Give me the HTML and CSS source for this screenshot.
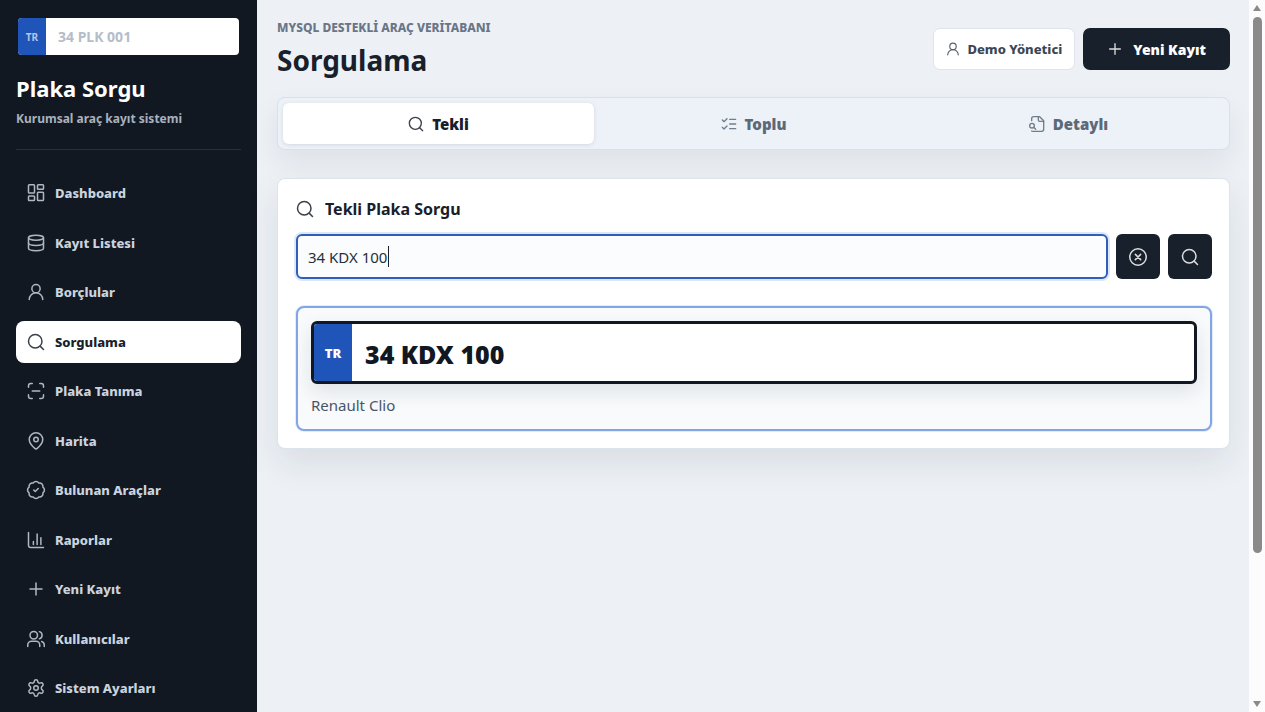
FILE: index.html
```html
<!DOCTYPE html>
<html lang="tr">
<head>
  <meta charset="UTF-8" />
  <meta name="viewport" content="width=device-width, initial-scale=1.0" />
  <title>Plaka Sorgu</title>
  <link rel="stylesheet" href="styles.css">
</head>
<body>

  <!-- Shared icons -->
  <svg class="sprite" aria-hidden="true">
    <symbol id="i-search" viewBox="0 0 24 24"><circle cx="11" cy="11" r="9"/><path d="m22 22-4.500-4.500"/></symbol>
    <symbol id="i-user" viewBox="0 0 24 24"><circle cx="12" cy="7.500" r="5.500"/><path d="M21 22a9 9 0 0 0-18 0"/></symbol>
    <symbol id="i-plus" viewBox="0 0 24 24"><path d="M4 12h16M12 4v16"/></symbol>
  </svg>

  <div class="app">
    <aside class="sidebar">
      <div class="brand">
        <div class="mini-plate">
          <span class="mini-tr">TR</span>
          <span class="mini-no">34 PLK 001</span>
        </div>
        <h2>Plaka Sorgu</h2>
        <p>Kurumsal araç kayıt sistemi</p>
      </div>

      <nav class="menu">
        <a href="#dashboard"><svg class="icon" viewBox="0 0 24 24"><rect x="2" y="1" width="8" height="11" rx="1"/><rect x="14" y="1" width="8" height="6" rx="1"/><rect x="14" y="11" width="8" height="11" rx="1"/><rect x="2" y="16" width="8" height="6" rx="1"/></svg>Dashboard</a>
        <a href="#kayitlar"><svg class="icon" viewBox="0 0 24 24"><ellipse cx="12" cy="5" rx="10" ry="3.2"/><path d="M2 5v14c0 1.800 4.500 3.200 10 3.200s10-1.400 10-3.200V5"/><path d="M2 12c0 1.800 4.500 3.200 10 3.200s10-1.400 10-3.200"/></svg>Kayıt Listesi</a>
        <a href="#borclular"><svg class="icon"><use href="#i-user"/></svg>Borçlular</a>
        <a href="#sorgulama" class="active"><svg class="icon"><use href="#i-search"/></svg>Sorgulama</a>
        <a href="#tanima"><svg class="icon" viewBox="0 0 24 24"><path d="M2 7V5a3 3 0 0 1 3-3h2M17 2h2a3 3 0 0 1 3 3v2M22 17v2a3 3 0 0 1-3 3h-2M7 22H5a3 3 0 0 1-3-3v-2M7 12h10"/></svg>Plaka Tanıma</a>
        <a href="#harita"><svg class="icon" viewBox="0 0 24 24"><path d="M21 10c0 5-5.500 10.200-7.400 11.800a2.500 2.500 0 0 1-3.200 0C8.500 20.200 3 15 3 10a9 9 0 0 1 18 0"/><circle cx="12" cy="10" r="3"/></svg>Harita</a>
        <a href="#bulunan"><svg class="icon" viewBox="0 0 24 24"><path d="M2.800 8.200a4.500 4.500 0 0 1 5.400-5.400 4.500 4.500 0 0 1 7.600 0 4.500 4.500 0 0 1 5.400 5.400 4.500 4.500 0 0 1 0 7.600 4.500 4.500 0 0 1-5.400 5.400 4.500 4.500 0 0 1-7.600 0 4.500 4.500 0 0 1-5.400-5.400 4.500 4.500 0 0 1 0-7.600Z"/><path d="m9 12 2 2 4-4"/></svg>Bulunan Araçlar</a>
        <a href="#raporlar"><svg class="icon" viewBox="0 0 24 24"><path d="M2 2v17a3 3 0 0 0 3 3h17M18.500 18V9M13.500 18V4M8.500 18v-4"/></svg>Raporlar</a>
        <a href="#yeni"><svg class="icon"><use href="#i-plus"/></svg>Yeni Kayıt</a>
        <a href="#kullanicilar"><svg class="icon" viewBox="0 0 24 24"><circle cx="9" cy="7" r="5"/><path d="M1 22v-2a5 5 0 0 1 5-5h6a5 5 0 0 1 5 5v2M23 22v-2a5 5 0 0 0-3.500-4.700M16.500 2.200a5 5 0 0 1 0 9.600"/></svg>Kullanıcılar</a>
        <a href="#ayarlar"><svg class="icon" viewBox="0 0 24 24"><path d="M9.670 3.140a2.340 2.340 0 0 1 4.660 0 2.500 2.500 0 0 0 3.600 2.100 2.500 2.500 0 0 1 2.500 4.300 2.900 2.900 0 0 0 0 4.900 2.500 2.500 0 0 1-2.500 4.300 2.500 2.500 0 0 0-3.600 2.100 2.340 2.340 0 0 1-4.660 0 2.500 2.500 0 0 0-3.600-2.100 2.500 2.500 0 0 1-2.500-4.300 2.900 2.900 0 0 0 0-4.900 2.500 2.500 0 0 1 2.500-4.300 2.500 2.500 0 0 0 3.600-2.100"/><circle cx="12" cy="12" r="3"/></svg>Sistem Ayarları</a>
      </nav>
    </aside>

    <main class="content">
      <header class="topbar">
        <div class="heading">
          <p class="eyebrow">MYSQL DESTEKLİ ARAÇ VERİTABANI</p>
          <h1>Sorgulama</h1>
        </div>
        <div class="actions">
          <button type="button" class="user-btn"><svg class="icon tiny"><use href="#i-user"/></svg>Demo Yönetici</button>
          <button type="button" class="new-btn"><svg class="icon small"><use href="#i-plus"/></svg>Yeni Kayıt</button>
        </div>
      </header>

      <div class="tabs">
        <button type="button" class="tab active"><svg class="icon small"><use href="#i-search"/></svg>Tekli</button>
        <button type="button" class="tab"><svg class="icon small" viewBox="0 0 24 24"><path d="M13 5h9M13 12h9M13 19h9M2 17l2.500 2.500L9 15M2 6l2.500 2.500L9 4"/></svg>Toplu</button>
        <button type="button" class="tab"><svg class="icon small" viewBox="0 0 24 24"><path d="M14 1v5a2 2 0 0 0 2 2h6"/><path d="M4 22.500a3 3 0 0 0 2 .5h13a3 3 0 0 0 3-3V7l-6-6H7a3 3 0 0 0-3 3v3"/><circle cx="4.500" cy="14.500" r="3.500"/><path d="m10 20-3-3"/></svg>Detaylı</button>
      </div>

      <section class="card">
        <h3><svg class="icon"><use href="#i-search"/></svg><label for="plate">Tekli Plaka Sorgu</label></h3>
        <form class="search-row" id="searchForm">
          <div class="field">
            <input type="text" id="plate" value="34 KDX 100" autocomplete="off">
            <span class="caret" aria-hidden="true"></span>
          </div>
          <button type="button" class="square-btn" id="clearBtn" aria-label="Temizle"><svg class="icon" viewBox="0 0 24 24"><circle cx="12" cy="12" r="11"/><path d="m15.500 8.500-7 7M8.500 8.500l7 7"/></svg></button>
          <button type="submit" class="square-btn" aria-label="Sorgula"><svg class="icon"><use href="#i-search"/></svg></button>
        </form>

        <button type="button" class="result">
          <span class="plate">
            <span class="plate-tr">TR</span>
            <span class="plate-no">34 KDX 100</span>
          </span>
          <span class="vehicle">Renault Clio</span>
        </button>
      </section>
    </main>

    <div class="scrollbar" aria-hidden="true">
      <svg class="arrow" viewBox="0 0 10 8"><path d="M5 1 9 7H1z"/></svg>
      <div class="track"><div class="thumb"></div></div>
      <svg class="arrow" viewBox="0 0 10 8"><path d="M5 7 9 1H1z"/></svg>
    </div>
  </div>

  <script>
    const plate = document.getElementById('plate');

    document.getElementById('clearBtn').addEventListener('click', () => {
      plate.value = '';
      plate.focus();
    });

    // the drawn caret is only for the idle state
    plate.addEventListener('focus', () => {
      document.querySelector('.caret').hidden = true;
    });

    document.getElementById('searchForm').addEventListener('submit', e => {
      e.preventDefault();
      document.querySelector('.plate-no').textContent = plate.value.toUpperCase();
    });
  </script>

</body>
</html>
```
FILE: styles.css
```css
* {
  box-sizing: border-box;
}

body {
  margin: 0;
  font-family: 'Segoe UI', 'Noto Sans', 'Open Sans', sans-serif;
  font-size: 15px;
  color: #18202b;
  background: #edf1f6;
}

h1, h2, h3, p {
  margin: 0;
}

button, input {
  font-family: inherit;
}

button {
  cursor: pointer;
}

.sprite {
  position: absolute;
  width: 0;
  height: 0;
}

.icon {
  width: 18px;
  height: 18px;
  flex: none;
  fill: none;
  stroke: currentColor;
  stroke-width: 2;
  stroke-linecap: round;
  stroke-linejoin: round;
  overflow: visible;
  opacity: 0.85;
}

.icon.small {
  width: 16px;
  height: 16px;
}

.icon.tiny {
  width: 14px;
  height: 14px;
}

.app {
  display: flex;
  height: 100vh;
}

/* Sidebar */
.sidebar {
  width: 257px;
  flex: none;
  display: flex;
  flex-direction: column;
  padding: 16px 16px 3px;
  background: #111822;
}

.brand {
  padding-bottom: 20px;
  margin-bottom: 22px;
  border-bottom: 1px solid #29303a;
}

.mini-plate {
  display: flex;
  height: 41px;
  border: 2px solid #111822;
  border-radius: 6px;
  overflow: hidden;
  background: #fff;
  font-weight: 700;
}

.mini-tr {
  display: flex;
  align-items: center;
  justify-content: center;
  width: 28px;
  background: #1f55b8;
  color: #b5c5e6;
  font-size: 10px;
}

.mini-no {
  padding-left: 12px;
  font-size: 14px;
  line-height: 38px;
  color: #b4bdca;
}

.brand h2 {
  margin-top: 15px;
  font-size: 22px;
  line-height: 32px;
  font-weight: 700;
  color: #fff;
}

.brand p {
  margin-top: 5px;
  font-size: 12px;
  line-height: 20px;
  font-weight: 700;
  color: #a9b1be;
}

.menu {
  flex: 1;
  display: flex;
  flex-direction: column;
  justify-content: space-between;
}

.menu a {
  display: flex;
  align-items: center;
  gap: 10px;
  height: 42px;
  padding: 0 11px;
  border-radius: 8px;
  color: #cbd3df;
  font-size: 13px;
  font-weight: 800;
  text-decoration: none;
}

.menu a.active {
  background: #fff;
  color: #18202b;
}

/* Content */
.content {
  flex: 1;
  min-width: 0;
  padding: 18px 19px 18px 20px;
}

.topbar {
  display: flex;
  justify-content: space-between;
  align-items: flex-start;
}

.eyebrow {
  font-size: 12px;
  line-height: 20px;
  font-weight: 800;
  color: #6a7687;
}

h1 {
  font-size: 28px;
  line-height: 44px;
  font-weight: 700;
}

.actions {
  display: flex;
  gap: 8px;
  padding-top: 10px;
}

.user-btn,
.new-btn {
  display: flex;
  align-items: center;
  justify-content: center;
  height: 42px;
  border-radius: 7px;
}

.user-btn {
  gap: 7px;
  padding: 0 12px;
  border: 1px solid #dde4ee;
  background: #fff;
  color: #3a4656;
  font-size: 13px;
  font-weight: 800;
}

.new-btn {
  gap: 10px;
  padding: 0 24px;
  border: none;
  background: #18202b;
  color: #fff;
  font-size: 14px;
  font-weight: 900;
}

.tabs {
  display: grid;
  grid-template-columns: repeat(3, 1fr);
  gap: 4px;
  margin-top: 15px;
  padding: 5px;
  border: 1px solid #d8e0ea;
  border-radius: 8px;
  background: #edf2f8;
  box-shadow: 0 12px 28px rgba(24, 32, 43, 0.07);
}

.tab {
  display: flex;
  align-items: center;
  justify-content: center;
  gap: 8px;
  height: 41px;
  border: none;
  border-radius: 6px;
  background: none;
  color: #5c6979;
  font-size: 15px;
  font-weight: 900;
}

.tab.active {
  background: #fff;
  color: #18202b;
  box-shadow: 0 1px 4px rgba(24, 32, 43, 0.12);
}

.card {
  margin-top: 28px;
  padding: 17px 17px 17px 18px;
  border: 1px solid #dbe3ec;
  border-radius: 8px;
  background: #fff;
  box-shadow: 0 14px 34px rgba(24, 32, 43, 0.09);
}

.card h3 {
  display: flex;
  align-items: center;
  gap: 11px;
  font-size: 16px;
  line-height: 26px;
  font-weight: 700;
}

.search-row {
  display: flex;
  gap: 8px;
  margin-top: 12px;
}

.field {
  position: relative;
  flex: 1;
}

.field input {
  display: block;
  width: 100%;
  height: 45px;
  padding: 0 10px;
  border: 2px solid #2f5fb8;
  border-radius: 6px;
  outline: none;
  background: #fbfcfe;
  box-shadow: 0 0 0 2px #dbe8fb;
  color: #26303c;
  font-size: 15px;
}

/* Text cursor at the end of the value */
.caret {
  position: absolute;
  left: 92px;
  top: 12px;
  width: 1px;
  height: 21px;
  background: #18202b;
}

.square-btn {
  display: flex;
  align-items: center;
  justify-content: center;
  width: 44px;
  height: 45px;
  padding: 0;
  border: none;
  border-radius: 6px;
  background: #18202b;
  color: #fff;
}

.result {
  display: block;
  width: 100%;
  margin-top: 27px;
  padding: 13px;
  border: 2px solid #82a5e6;
  border-radius: 8px;
  background: #f8fafc;
  box-shadow: 0 0 0 1px #e2ecfb;
  text-align: left;
}

.plate {
  display: flex;
  height: 63px;
  border: 3px solid #111822;
  border-radius: 6px;
  overflow: hidden;
  background: #fff;
  box-shadow: 0 8px 20px rgba(24, 32, 43, 0.11);
}

.plate-tr {
  display: flex;
  align-items: center;
  justify-content: center;
  width: 38px;
  background: #1f55b8;
  color: #fff;
  font-size: 13px;
  font-weight: 900;
}

.plate-no {
  padding-left: 13px;
  color: #111822;
  font-size: 25px;
  line-height: 60px;
  font-weight: 900;
}

.vehicle {
  display: block;
  margin-top: 10px;
  color: #485566;
  font-size: 15px;
  line-height: 22px;
}

/* Scrollbar */
.scrollbar {
  flex: none;
  display: flex;
  flex-direction: column;
  align-items: center;
  width: 16px;
  padding: 4px 0;
  background: #fcfcfd;
}

.arrow {
  width: 10px;
  height: 8px;
  fill: #8a8a8a;
}

.track {
  flex: 1;
  padding: 5px 0;
}

.thumb {
  width: 9px;
  height: 79%;
  border-radius: 5px;
  background: #8a8a8a;
}
```
